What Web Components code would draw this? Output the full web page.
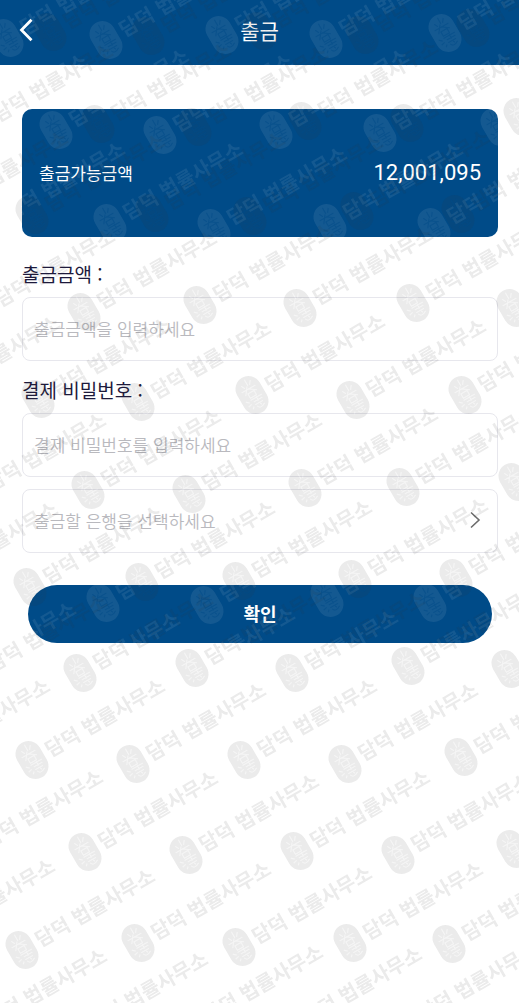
<!DOCTYPE html>
<html lang="ko">
<head>
<meta charset="UTF-8">
<meta name="viewport" content="width=device-width, initial-scale=1.0">
<title>출금</title>
<style>
  body {
    margin: 0;
    background: #fff;
    color: #1d1a3c;
    font-family: "Noto Sans CJK KR", sans-serif;
  }
</style>
</head>
<body>
<withdraw-page>
  <page-header slot="header">출금</page-header>
  <balance-card label="출금가능금액">12,001,095</balance-card>
  <form-field label="출금금액 :" placeholder="출금금액을 입력하세요" type="text"></form-field>
  <form-field label="결제 비밀번호 :" placeholder="결제 비밀번호를 입력하세요" type="password"></form-field>
  <bank-picker>출금할 은행을 선택하세요</bank-picker>
  <submit-button>확인</submit-button>
</withdraw-page>

<script>
class WithdrawPage extends HTMLElement {
  constructor() {
    super();
    const shadow = this.attachShadow({ mode: 'open' });
    shadow.innerHTML = /*html*/ `
      <style>
        :host {
          display: block;
          position: relative;
          min-height: 100vh;
          overflow: hidden;
          --brand: #004b88;
          --line: #e7e7ed;
          --hint: #b9b9be;
        }
        main {
          display: flex;
          flex-direction: column;
          padding: 44px 21px 32px 22px;
        }
      </style>
      <slot name="header"></slot>
      <main><slot></slot></main>
      <water-mark></water-mark>
    `;
  }
}

class PageHeader extends HTMLElement {
  constructor() {
    super();
    const shadow = this.attachShadow({ mode: 'open' });
    shadow.innerHTML = /*html*/ `
      <style>
        :host { display: block; }
        header {
          display: grid;
          grid-template-columns: 52px 1fr 52px;
          align-items: center;
          height: 65px;
          padding-bottom: 6px;
          box-sizing: border-box;
          background: var(--brand);
          color: #fff;
        }
        button {
          display: grid;
          place-items: center;
          height: 52px;
          padding: 0;
          border: 0;
          background: none;
          color: inherit;
        }
        h1 {
          margin: 0;
          font-size: 21px;
          line-height: 28px;
          font-weight: 400;
          text-align: center;
        }
      </style>
      <header>
        <button type="button" aria-label="뒤로">
          <svg width="16" height="24" viewBox="0 0 16 24" fill="none" stroke="currentColor" stroke-width="2.8">
            <path d="M13.5 1.8 L3.5 12 L13.5 22.2"/>
          </svg>
        </button>
        <h1><slot></slot></h1>
      </header>
    `;
  }
}

class BalanceCard extends HTMLElement {
  constructor() {
    super();
    const label = this.getAttribute('label');
    const shadow = this.attachShadow({ mode: 'open' });
    shadow.innerHTML = /*html*/ `
      <style>
        :host {
          display: flex;
          justify-content: space-between;
          align-items: center;
          height: 128px;
          padding: 0 17px 2px;
          box-sizing: border-box;
          border-radius: 10px;
          background: var(--brand);
          color: #fff;
        }
        .label { font-size: 17px; }
        .amount { font-family: Roboto, sans-serif; font-size: 22px; }
      </style>
      <span class="label">${label}</span>
      <span class="amount"><slot></slot></span>
    `;
  }
}

class FormField extends HTMLElement {
  constructor() {
    super();
    const label = this.getAttribute('label');
    const placeholder = this.getAttribute('placeholder');
    const type = this.getAttribute('type');
    const shadow = this.attachShadow({ mode: 'open' });
    shadow.innerHTML = /*html*/ `
      <style>
        :host {
          display: flex;
          flex-direction: column;
          gap: 10px;
          margin-top: 16px;
        }
        :host(:nth-of-type(1)) { margin-top: 24px; }
        label {
          font-size: 19px;
          line-height: 26px;
        }
        input {
          height: 64px;
          box-sizing: border-box;
          width: 100%;
          padding: 0 11px 2px;
          border: 1px solid var(--line);
          border-radius: 8px;
          background: #fff;
          font: 350 17px "Noto Sans CJK KR", sans-serif;
          outline: none;
        }
        input::placeholder { color: var(--hint); opacity: 1; }
      </style>
      <label for="field">${label}</label>
      <input id="field" type="${type}" placeholder="${placeholder}">
    `;
  }
}

class BankPicker extends HTMLElement {
  constructor() {
    super();
    const shadow = this.attachShadow({ mode: 'open' });
    shadow.innerHTML = /*html*/ `
      <style>
        :host { display: block; margin-top: 12px; }
        button {
          display: flex;
          justify-content: space-between;
          align-items: center;
          width: 100%;
          height: 64px;
          padding: 0 16px 2px 11px;
          border: 1px solid var(--line);
          border-radius: 8px;
          background: #fff;
          color: var(--hint);
          font: 350 17px "Noto Sans CJK KR", sans-serif;
        }
      </style>
      <button type="button" aria-haspopup="listbox">
        <slot></slot>
        <svg width="12" height="18" viewBox="0 0 12 18" fill="none" stroke="#6b6b6b" stroke-width="1.6">
          <path d="M2 1.5 L10 9 L2 16.5"/>
        </svg>
      </button>
    `;
  }
}

class SubmitButton extends HTMLElement {
  constructor() {
    super();
    const shadow = this.attachShadow({ mode: 'open' });
    shadow.innerHTML = /*html*/ `
      <style>
        :host { display: block; margin: 32px 6px 0; }
        button {
          width: 100%;
          height: 58px;
          padding: 0 0 2px;
          border: 0;
          border-radius: 29px;
          background: var(--brand);
          color: #fff;
          font: 700 18px "Noto Sans CJK KR", sans-serif;
        }
      </style>
      <button type="submit"><slot></slot></button>
    `;
  }
}

// Seal centres of the dark marks, row by row
const DARK = [
  [50, 32], [148, 36], [260, 31], [362, 35], [473, 28],
  [-20, 125], [98, 124], [195, 127], [305, 121], [407, 123], [520, 117],
  [-65, 212], [32, 215], [152, 213], [250, 216], [357, 211], [458, 214],
  [-18, 310], [84, 312], [200, 305], [300, 308], [413, 303], [513, 308],
  [-73, 397], [38, 399], [138, 402], [252, 395], [353, 400], [465, 395],
  [-27, 494], [88, 490], [189, 494], [305, 488], [403, 487], [515, 482],
  [-75, 583], [30, 587], [142, 582], [239, 581], [355, 579], [456, 578],
  [-26, 675], [80, 673], [192, 668], [292, 673], [408, 666], [508, 669],
  [-83, 760], [32, 760], [133, 764], [244, 760], [345, 764], [461, 757],
  [-30, 851], [85, 852], [186, 855], [297, 851], [398, 855], [513, 849],
  [-78, 940], [22, 950], [138, 943], [239, 947], [350, 943], [449, 944],
  [-26, 1030], [75, 1033], [190, 1026], [289, 1028], [405, 1024]
];

// Light marks, they only show on the blue parts
const LIGHT = [
  [7, 38], [106, 40], [222, 35], [326, 39], [445, 33],
  [-45, 135], [56, 130], [160, 135], [276, 130], [380, 133], [497, 127],
  [-8, 223], [110, 223], [214, 228], [330, 223], [434, 227],
  [103, 603], [207, 605], [327, 598], [430, 603],
  [-57, 683], [47, 693], [162, 688], [265, 691], [378, 685]
];

class WaterMark extends HTMLElement {
  constructor() {
    super();
    const shadow = this.attachShadow({ mode: 'open' });
    const mark = ([x, y]) => `
      <g transform="translate(${x} ${y}) rotate(-30)">
        <rect x="-13" y="-20" width="26" height="40" rx="13" mask="url(#seal)"/>
        <text x="17" y="7">담덕 법률사무소</text>
      </g>`;
    shadow.innerHTML = /*html*/ `
      <style>
        :host {
          position: absolute;
          inset: 0;
          pointer-events: none;
        }
        svg { display: block; width: 100%; height: 100%; }
        text { font: 700 20px "Noto Sans CJK KR", sans-serif; }
        .light { fill: #fff; opacity: 0.08; }
        .dark { fill: #333; opacity: 0.1; }
      </style>
      <svg aria-hidden="true">
        <mask id="seal" maskUnits="userSpaceOnUse" x="-14" y="-21" width="28" height="42">
          <rect x="-14" y="-21" width="28" height="42" fill="#fff"/>
          <path d="M1 -17 V-10 M-5 -13 L-3 -9 M6 -14 L3 -10 M-8 -7 H8 M0 -10 L-6 -2 M0 -7 L7 -2 M-3 -3 H4 V2 H-3 Z M-9 3 L-6 6 M-4 4 H9 M3 3 V8 M-2 7 H8 M-9 9 L-5 8 M-2 10 H7 M-6 13 L-4 11 M-1 12 Q1 17 7 13 M3 11 L4 13"
            fill="none" stroke="#000" stroke-opacity="0.5" stroke-width="1.2"/>
        </mask>
        <g class="light">${LIGHT.map(mark).join('')}</g>
        <g class="dark">${DARK.map(mark).join('')}</g>
      </svg>
    `;
  }
}

customElements.define('water-mark', WaterMark);
customElements.define('page-header', PageHeader);
customElements.define('balance-card', BalanceCard);
customElements.define('form-field', FormField);
customElements.define('bank-picker', BankPicker);
customElements.define('submit-button', SubmitButton);
customElements.define('withdraw-page', WithdrawPage);
</script>
</body>
</html>
